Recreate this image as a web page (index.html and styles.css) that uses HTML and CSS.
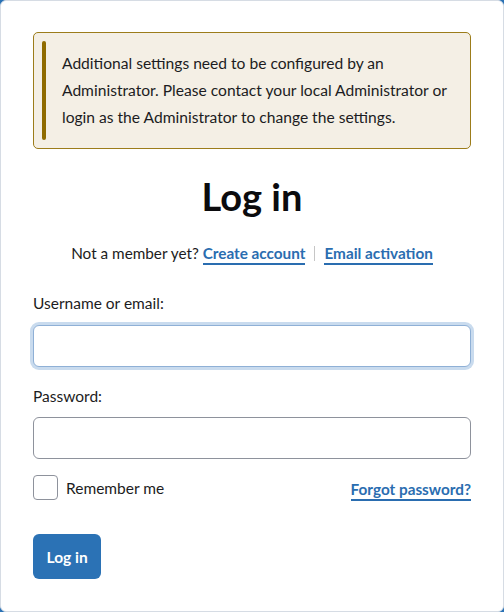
FILE: index.html
```html
<!DOCTYPE html>
<html lang="en">
<head>
<meta charset="utf-8">
<title>Log in</title>
<link rel="stylesheet" href="styles.css">
</head>
<body>
<main class="card">
  <div class="message">
    <span class="message-bar"></span>
    <p class="message-text">Additional settings need to be configured by an Administrator. Please contact your local Administrator or login as the Administrator to change the settings.</p>
  </div>
  <h1 class="title">Log in</h1>
  <p class="member">Not a member yet? <a class="link" href="#">Create account</a><span class="sep"></span><a class="link" href="#">Email activation</a></p>
  <form class="form">
    <label class="label" for="user">Username or email:</label>
    <input class="input input-focus" id="user" type="text">
    <label class="label label-second" for="pass">Password:</label>
    <input class="input" id="pass" type="password">
    <div class="row">
      <label class="remember"><span class="checkbox"></span>Remember me</label>
      <a class="link" href="#">Forgot password?</a>
    </div>
    <button class="button" type="button">Log in</button>
  </form>
</main>
</body>
</html>
```
FILE: styles.css
```css
* { box-sizing: border-box; }
html, body { margin: 0; padding: 0; }
body {
  background: #2a72b5;
  font-family: Lato, "Noto Sans", sans-serif;
  color: #1c1c22;
}
.card {
  height: 612px;
  background: #fff;
  border: 1px solid #d6dce4;
  border-radius: 6px;
  padding: 31px 32px 0 32px;
}
.message {
  display: flex;
  padding: 8px;
  background: #f4efe5;
  border: 1px solid #9c7c1a;
  border-radius: 5px;
}
.message-bar {
  flex: 0 0 4px;
  background: #8f6b00;
  border-radius: 2px;
}
.message-text {
  margin: 0;
  padding: 9px 8px 9px 16px;
  font-size: 15.6px;
  line-height: 27px;
}
.title {
  margin: 23px 0 0;
  text-align: center;
  font-size: 38px;
  line-height: 48px;
  font-weight: 700;
  color: #0b0b0e;
}
.member {
  margin: 23px 0 0;
  text-align: center;
  font-size: 15.3px;
  line-height: 20px;
}
.link {
  color: #2a6db0;
  font-weight: 700;
  text-decoration: none;
  border-bottom: 2px solid #2a6db0;
  display: inline-block;
  line-height: 20px;
}
.sep {
  display: inline-block;
  width: 1px;
  height: 15px;
  background: #c6c6c6;
  margin: 0 9px;
  vertical-align: -2px;
}
.form {
  display: flex;
  flex-direction: column;
  align-items: stretch;
  margin-top: 28px;
}
.label {
  font-size: 15.5px;
  line-height: 20px;
  margin-bottom: 12px;
}
.label-second { margin-top: 19px; margin-bottom: 11px; }
.input {
  height: 42px;
  border: 1px solid #8e929c;
  border-radius: 6px;
  background: #fff;
  font: inherit;
}
.input-focus {
  border-color: #8fb0d6;
  box-shadow: 0 0 0 3px #c9dbee;
  outline: none;
}
.row {
  display: flex;
  justify-content: space-between;
  align-items: center;
  margin-top: 16px;
  height: 25px;
}
.remember {
  display: flex;
  align-items: center;
  gap: 8px;
  font-size: 15.5px;
}
.checkbox {
  width: 25px;
  height: 25px;
  border: 1px solid #8e929c;
  border-radius: 4px;
}
.row .link { font-size: 15.3px; margin-top: 4px; }
.button {
  align-self: flex-start;
  margin-top: 34px;
  height: 45px;
  padding: 0 13.5px;
  background: #2b72b5;
  color: #fff;
  border: 0;
  border-radius: 6px;
  font-family: inherit;
  font-size: 15.5px;
  font-weight: 700;
}
```
